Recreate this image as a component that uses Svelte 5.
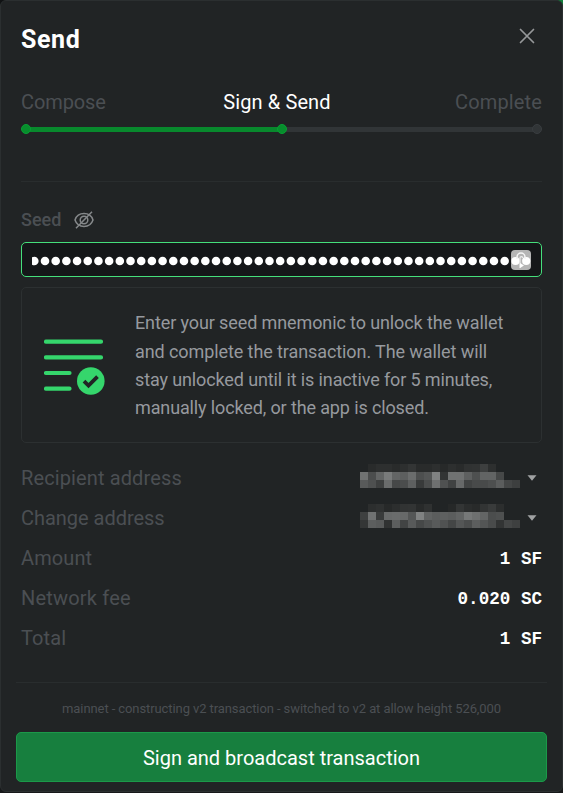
<script>
  const steps = [
    { label: 'Compose', cls: 'first' },
    { label: 'Sign & Send', cls: 'current' },
    { label: 'Complete', cls: 'last' }
  ];
  const dots = Array.from({ length: 47 }, (_, i) => 2.3 + i * 10.69);
  const info = [
    ['Enter your seed mnemonic to unlock the wallet', 'l1'],
    ['and complete the transaction. The wallet will', 'l2'],
    ['stay unlocked until it is inactive for 5 minutes,', 'l3'],
    ['manually locked, or the app is closed.', 'l4']
  ];
  // Grey level of each cell in the obscured addresses, 0 leaves the cell empty.
  const addresses = [
    {
      label: 'Recipient address',
      cls: 'recipient',
      cells: [
        [0, 41, 45, 45, 41, 45, 51, 41, 41, 45, 39, 45, 41, 48, 49, 61, 45, 0, 0, 0],
        [112, 75, 99, 121, 99, 93, 107, 77, 84, 128, 50, 112, 112, 94, 78, 98, 98, 70, 0, 0],
        [88, 78, 62, 106, 70, 75, 94, 56, 75, 110, 79, 64, 103, 65, 72, 72, 77, 91, 68, 61]
      ]
    },
    {
      label: 'Change address',
      cls: 'change',
      cells: [
        [0, 44, 47, 39, 44, 49, 50, 40, 47, 0, 0, 38, 51, 43, 40, 50, 57, 44, 0, 0],
        [62, 112, 57, 104, 106, 103, 84, 128, 97, 91, 94, 91, 98, 118, 110, 99, 75, 78, 0, 0],
        [52, 92, 88, 48, 92, 66, 88, 70, 79, 88, 80, 68, 84, 75, 92, 83, 73, 50, 68, 62]
      ]
    }
  ];
  const amounts = [
    { label: 'Amount', cls: 'amount', value: '1 SF' },
    { label: 'Network fee', cls: 'fee', value: '0.020 SC' },
    { label: 'Total', cls: 'total', value: '1 SF' }
  ];
</script>

<div class="page">
  <div class="dialog">
    <header>
      <h1>Send</h1>
      <svg class="close" width="16" height="16" viewBox="0 0 16 16"><path d="M1.5 1.5l13 13M14.5 1.5l-13 13" /></svg>
    </header>

    <div class="steps">
      {#each steps as s}<span class={s.cls}>{s.label}</span>{/each}
    </div>
    <div class="progress">
      <i class="dot on"></i><i class="bar on"></i><i class="dot on"></i><i class="bar"></i><i class="dot"></i>
    </div>
    <hr />

    <div class="seed">
      <label for="seed">Seed</label>
      <svg width="20" height="18" viewBox="0 0 20 18">
        <path d="M1 9C2.4 4.8 5.8 2.6 10 2.6S17.6 4.8 19 9c-1.4 4.2-4.8 6.4-9 6.4S2.400 13.200 1 9z" />
        <circle cx="10" cy="9" r="3.8" />
        <path d="M2 17.300L18 .7M8.200 10.800l3.600-3.600" />
      </svg>
    </div>
    <div class="field" id="seed">
      <svg class="mask" width="499" height="10" viewBox="0 0 499 10">
        {#each dots as x}<circle cx={x} cy="5" r="4.3" />{/each}
      </svg>
      <svg class="key" width="20" height="20" viewBox="0 0 20 20">
        <rect width="20" height="20" rx="4" fill="#b5b5b5" />
        <circle cx="4.500" cy="11" r="4.100" fill="#fff" />
        <circle cx="15.200" cy="11" r="4.100" fill="#fff" />
        <path d="M6 9V7a4 4 0 0 1 8 0v2" fill="none" stroke="#f4f4f4" stroke-width="1.500" />
        <path d="M9 18V8a1.400 1.400 0 0 1 2.800 0" fill="none" stroke="#eee" stroke-width="1.200" />
        <path d="M9 13l4 2.500L9 18z" fill="#fff" />
      </svg>
    </div>

    <section class="info">
      <svg width="62" height="58" viewBox="0 0 62 58">
        <path d="M2 3.700h55M2 19.400h55M2 35h23.500M2 50.700h23.500" stroke="#35d66c" stroke-width="4.200" stroke-linecap="round" />
        <circle cx="46.800" cy="43" r="13.800" fill="#35d66c" />
        <path d="M40 43.200l4.500 4.400 9-9" fill="none" stroke="#212425" stroke-width="3.800" />
      </svg>
      <p>{#each info as [text, cls]}<span class={cls}>{text}</span>{/each}</p>
    </section>

    <div class="rows">
      {#each addresses as a}
        <div class="row">
          <span class={a.cls}>{a.label}</span>
          <div class="address">
            <div class="cells">
              {#each a.cells.flat() as v}
                <i style:background={v ? `rgb(${v},${v + 2},${v + 2})` : 'transparent'}></i>
              {/each}
            </div>
            <svg width="10" height="6" viewBox="0 0 10 6"><path d="M.5 .3h9L5 5.700z" fill="#a0a2a3" /></svg>
          </div>
        </div>
      {/each}
      {#each amounts as a}
        <div class="row"><span class={a.cls}>{a.label}</span><b>{a.value}</b></div>
      {/each}
    </div>

    <footer>
      <small>mainnet - constructing v2 transaction - switched to v2 at allow height 526,000</small>
      <button><span>Sign and broadcast transaction</span></button>
    </footer>
  </div>
</div>

<style>
  .page {
    width: 563px;
    height: 793px;
    box-sizing: border-box;
    padding-bottom: 1px;
    background: linear-gradient(90deg, #101213 98%, #12803c 98%) top / 100% 20px no-repeat, #17191a;
    font-family: Roboto, "Liberation Sans", sans-serif;
    font-size: 20px;
    color: #4b4f53;
  }
  .dialog {
    height: 792px;
    box-sizing: border-box;
    border: 1px solid #2b2f30;
    border-radius: 6px;
    background: #212425;
    display: flex;
    flex-direction: column;
    overflow: hidden;
  }
  span { white-space: nowrap; }
  header {
    display: flex;
    justify-content: space-between;
    height: 76px;
    padding: 0 27px 0 20px;
  }
  h1 {
    margin: 0;
    font-size: 25px;
    line-height: 78px;
    font-weight: 700;
    letter-spacing: .6px;
    color: #fff;
  }
  .close { margin-top: 27px; fill: none; stroke: #96989a; stroke-width: 1.7; stroke-linecap: round; }
  .steps {
    display: grid;
    grid-template-columns: 1fr auto 1fr;
    margin: 10px 20px 0;
    height: 30px;
    line-height: 30px;
  }
  .first { letter-spacing: -.1px; }
  .current { color: #fff; letter-spacing: .1px; transform: translateX(-4.5px); }
  .last { text-align: right; letter-spacing: .15px; }
  .progress { display: flex; align-items: center; height: 10px; margin: 7px 20px 0; }
  .dot { width: 10px; height: 10px; box-sizing: border-box; border-radius: 50%; background: #313537; border: 1px solid #393d40; flex: none; }
  .bar { flex: 1; height: 5px; margin: 0 -1px; background: #313537; }
  .bar.on { background: #08892d; }
  .dot.on { background: #078e2d; border-color: #08a033; position: relative; }
  hr { width: 521px; height: 1px; border: 0; margin: 47px 0 0 20px; background: #292d2e; flex: none; }
  .seed { display: flex; align-items: center; gap: 13px; height: 30px; margin: 23px 20px 0; font-size: 18px; font-weight: 500; }
  .seed label { margin-top: -1px; }
  .seed svg { fill: none; stroke: #85888a; stroke-width: 1.5; }
  .field {
    height: 35px;
    box-sizing: border-box;
    margin: 7px 20px 0;
    padding: 0 10px;
    border: 1px solid #45df7b;
    border-radius: 5px;
    background: #151719;
    display: flex;
    align-items: center;
    flex: none;
  }
  .mask { fill: #fff; margin-top: 3px; flex: none; }
  .key { margin-left: -20px; margin-top: 1px; flex: none; }
  .info {
    height: 156px;
    box-sizing: border-box;
    margin: 10px 20px 0;
    padding: 2px 0 0 22px;
    border: 1px solid #2c3031;
    border-radius: 5px;
    display: flex;
    align-items: center;
    gap: 29px;
    flex: none;
  }
  .info svg { flex: none; margin-top: 2px; }
  .info p { margin: 0; display: flex; flex-direction: column; align-items: flex-start; font-size: 18px; line-height: 28.4px; color: #96999e; }
  .l1 { letter-spacing: -.11px; }
  .l2 { letter-spacing: -.09px; }
  .l3 { letter-spacing: -.12px; }
  .l4 { letter-spacing: -.13px; }
  .rows { margin: 15px 20px 0; }
  .row { height: 40px; display: flex; align-items: center; justify-content: space-between; }
  .recipient { letter-spacing: .12px; }
  .change { letter-spacing: -.03px; }
  .amount { letter-spacing: .1px; }
  .fee { letter-spacing: .2px; }
  .total { letter-spacing: .1px; }
  .row b { font: 700 17.6px "Liberation Mono", monospace; color: #fff; white-space: pre; padding-top: 1px; }
  .address { display: flex; align-items: center; gap: 7px; margin-right: 5px; }
  .cells { display: grid; grid-template-columns: repeat(20, 8px); grid-auto-rows: 8px; margin-top: -4px; }
  footer {
    width: 531px;
    margin: 24px 0 0 15px;
    border-top: 1px solid #292d2e;
    display: flex;
    flex-direction: column;
    align-items: center;
  }
  small { font-size: 13px; letter-spacing: -.09px; line-height: 20px; margin-top: 16px; white-space: nowrap; }
  button {
    width: 531px;
    height: 50px;
    margin: 13px 0 0;
    padding: 2px 0 0;
    border: 1px solid #1b9949;
    border-radius: 5px;
    background: #177f3e;
    color: #fff;
    font: 20px Roboto, "Liberation Sans", sans-serif;
  }
</style>
